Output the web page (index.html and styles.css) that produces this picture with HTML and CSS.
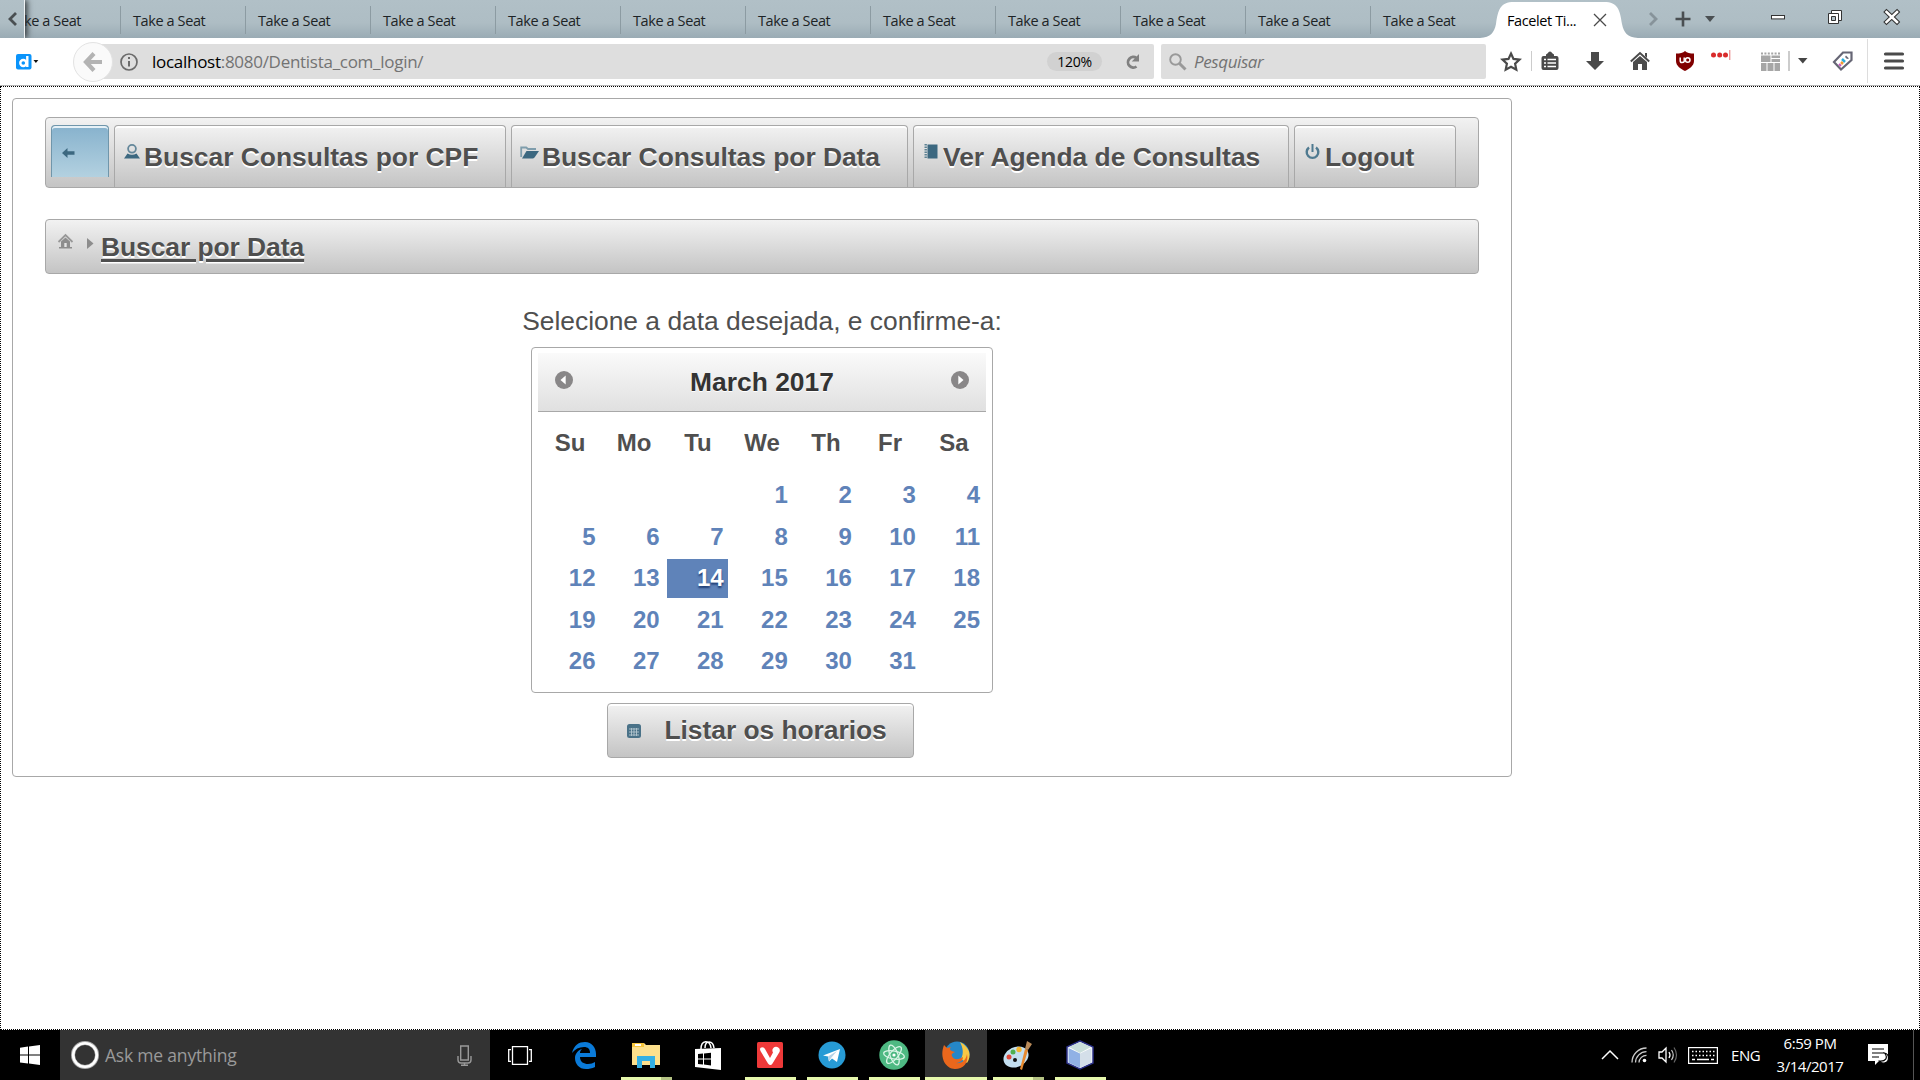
FILE: index.html
```html
<!DOCTYPE html>
<html lang="pt">
<head>
<meta charset="utf-8">
<title>Facelet Title</title>
<link rel="stylesheet" href="styles.css">
</head>
<body>
<header class="tabstrip">
  <div class="scroll-left"><svg width="10" height="16" viewBox="0 0 10 16"><path d="M8 2L2 8l6 6" fill="none" stroke="#4a4f52" stroke-width="2.8"/></svg></div>
  <div class="tab first"><span>ke a Seat</span></div>
  <div class="tab">Take a Seat</div><div class="tab">Take a Seat</div><div class="tab">Take a Seat</div><div class="tab">Take a Seat</div><div class="tab">Take a Seat</div><div class="tab">Take a Seat</div><div class="tab">Take a Seat</div><div class="tab">Take a Seat</div><div class="tab">Take a Seat</div><div class="tab">Take a Seat</div><div class="tab last">Take a Seat</div>
  <div class="active-tab">
    <svg class="tab-shape" width="158" height="36" viewBox="0 0 158 36"><path d="M0 36C11 35 14 31 16 22C18 8 20 0 34 0H124C138 0 140 8 142 22C144 31 147 35 158 36Z" fill="#fff"/></svg>
    <span class="active-label">Facelet Ti...</span>
    <svg class="tab-close" width="14" height="14" viewBox="0 0 14 14"><path d="M1 1l12 12M13 1L1 13" stroke="#4a4a4a" stroke-width="1.3"/></svg>
  </div>
  <div class="strip-tools">
    <svg class="t-next" width="10" height="16" viewBox="0 0 10 16"><path d="M2 2l6 6-6 6" fill="none" stroke="#87939a" stroke-width="2.8"/></svg>
    <svg class="t-plus" width="16" height="16" viewBox="0 0 16 16"><path d="M8 .5v15M.5 8h15" stroke="#4a4f52" stroke-width="2.6"/></svg>
    <svg class="t-all" width="10" height="6" viewBox="0 0 10 6"><path d="M0 0h10L5 6z" fill="#4a4f52"/></svg>
    <svg class="w-min" width="15" height="5" viewBox="0 0 15 5"><rect x=".5" y=".5" width="13" height="3.4" fill="#fff" stroke="#333"/></svg>
    <svg class="w-max" width="15" height="15" viewBox="0 0 15 15"><path d="M3.5.5h10v10h-10z" fill="#fff" stroke="#333"/><path d="M.5 3.5h10v10h-10z" fill="#fff" stroke="#333"/><path d="M3.5 6.500h4v4h-4z" fill="#afbec5" stroke="#333"/></svg>
    <svg class="w-close" width="16" height="16" viewBox="0 0 16 16"><path d="M2.500 3L13 13M13 3L2.500 13" stroke="#333" stroke-width="4.6" stroke-linecap="square"/><path d="M2.500 3L13 13M13 3L2.500 13" stroke="#fff" stroke-width="2.5" stroke-linecap="square"/></svg>
  </div>
</header>

<nav class="toolbar">
  <div class="ext-d"><svg width="24" height="16" viewBox="0 0 24 16"><rect width="15.500" height="15.500" rx="2" fill="#0a94fb"/><circle cx="7.300" cy="9" r="3" fill="none" stroke="#fff" stroke-width="2.400"/><path d="M11.300 2v11" stroke="#fff" stroke-width="2.400"/><path d="M17.500 6h4.800l-2.400 3z" fill="#111"/></svg></div>
  <div class="back-btn"><svg width="20" height="20" viewBox="0 0 20 20"><path d="M11 1.500L3 10l8 8.500M3 10h16" fill="none" stroke="#b3b3b3" stroke-width="4.200"/></svg></div>
  <div class="urlbar">
    <svg class="info" width="18" height="18" viewBox="0 0 18 18"><circle cx="9" cy="9" r="8" fill="none" stroke="#6b6b6b" stroke-width="1.700"/><path d="M9 8v5.500M9 4v2" stroke="#6b6b6b" stroke-width="2"/></svg>
    <span class="url"><b>localhost</b>:8080/Dentista_com_login/</span>
    <span class="zoom">120%</span>
    <svg class="reload" width="16" height="16" viewBox="0 0 16 16"><path d="M11.500 12.500A5.300 5.300 0 1 1 11.500 4" fill="none" stroke="#808080" stroke-width="2.800"/><path d="M14 0v7.500H6.800z" fill="#808080"/></svg>
  </div>
  <div class="search">
    <svg width="18" height="18" viewBox="0 0 18 18"><circle cx="6.500" cy="6.500" r="5.300" fill="none" stroke="#999" stroke-width="1.900"/><path d="M10.500 10.500L16.500 16.500" stroke="#999" stroke-width="3"/></svg>
    <span>Pesquisar</span>
  </div>
  <div class="tools">
    <svg class="i-star" width="22" height="21" viewBox="0 0 22 21"><path d="M11 2.500l2.500 5.400 6 .7-4.400 4.100 1.200 5.900L11 15.700l-5.300 2.900 1.200-5.900L2.500 8.600l6-.7z" fill="none" stroke="#4a4a4a" stroke-width="2.200"/></svg>
    <i class="sep short"></i>
    <svg class="i-clip" width="20" height="20" viewBox="0 0 20 20"><path d="M6 3.500l2-1.500q.3-1.500 2-1.500t2 1.500l2 1.500v1.500h2.500q2 0 2 2V17q0 2-2 2H3.500q-2 0-2-2V7q0-2 2-2H6z" fill="#4a4a4a"/><path d="M4 8.500h2M7.500 8.500H16M4 12h2M7.500 12H16M4 15.500h2M7.500 15.500H16" stroke="#fff" stroke-width="1.500"/></svg>
    <svg class="i-down" width="18" height="20" viewBox="0 0 18 20"><path d="M5 1h8v9h5L9 19 0 10h5z" fill="#4a4a4a"/></svg>
    <svg class="i-home" width="20" height="20" viewBox="0 0 20 20"><path d="M.8 10.500L10 2l9.200 8.500" fill="none" stroke="#4a4a4a" stroke-width="2"/><path d="M15 2h2v5l-2-2zM3 11l7-6 7 6v8h-5v-6H8v6H3z" fill="#4a4a4a"/></svg>
    <svg class="i-ub" width="18" height="20" viewBox="0 0 18 20"><path d="M9 0c2 2 5 2.500 9 2.500V10c0 5-5 8-9 10-4-2-9-5-9-10V2.500C4 2.500 7 2 9 0z" fill="#800000"/><path d="M4.200 6.500v3.200q0 1.800 1.700 1.800t2.300-1V6.500" fill="none" stroke="#fff" stroke-width="1.500"/><circle cx="11.700" cy="9" r="2.300" fill="none" stroke="#fff" stroke-width="1.500"/></svg>
    <svg class="i-dots" width="20" height="10" viewBox="0 0 20 10"><g fill="#d92b2b"><circle cx="2.500" cy="5" r="2.500"/><circle cx="8.700" cy="5" r="2.500"/><circle cx="14.500" cy="5" r="2.500"/></g><path d="M18.700 0v10" stroke="#e99" stroke-width="1.400"/></svg>
    <svg class="i-grid" width="19" height="19" viewBox="0 0 19 19"><path d="M0 1.500h19" stroke="#a6a6a6" stroke-width="2" stroke-dasharray="2 1.400"/><path d="M0 3.500h9.500V10H0zM10.500 3.500H19v2.500h-8.500zM10.500 7H19v3h-8.500zM0 11h5.500v8H0zM6.500 11h6v8h-6zM13.500 11H19v8h-5.500z" fill="#a6a6a6"/></svg>
    <i class="sep thick"></i>
    <svg class="i-caret" width="10" height="6" viewBox="0 0 10 6"><path d="M0 0h9.500L4.800 5.500z" fill="#444"/></svg>
    <svg class="i-tag" width="21" height="20" viewBox="0 0 21 20"><path d="M11 1.500h8.500V9L9 18.500 2 11z" fill="#fff" stroke="#666675" stroke-width="2.200"/><path d="M14 4.500l3 3-2 .5-2-2z" fill="#6a6a78"/><path d="M10 8l3 3" stroke="#2aaedc" stroke-width="2.500"/><path d="M9 11l2 2" stroke="#f39a33" stroke-width="2.500"/><path d="M7 13l2 2" stroke="#c754c0" stroke-width="2"/></svg>
    <i class="sep tall"></i>
    <svg class="i-menu" width="20" height="18" viewBox="0 0 20 18"><path d="M1.500 2h17M1.500 9h17M1.500 16h17" stroke="#4a4a4a" stroke-width="3.200" stroke-linecap="round"/></svg>
  </div>
</nav>

<main class="page">
  <section class="panel">
    <div class="menubar">
      <a class="menu-back"><svg width="13" height="10" viewBox="0 0 13 10"><path d="M0 5l5.500-5V3.300h7v3.400h-7V10z" fill="#3c6880"/></svg></a>
      <a class="menu-item m1"><svg width="16" height="15" viewBox="0 0 16 15"><circle cx="8" cy="4.800" r="3.900" fill="none" stroke="#64879a" stroke-width="1.800"/><path d="M0 14.500l3.500-5Q8 12 12.500 9.500L16 14.500z" fill="#3c6880"/></svg><span>Buscar Consultas por CPF</span></a>
      <a class="menu-item m2"><svg width="19" height="13" viewBox="0 0 19 13"><path d="M1.200 11V1.500h5L8 3h8" fill="none" stroke="#7f9dac" stroke-width="1.800"/><path d="M6.500 5H19l-4.500 6.500q-.7 1-2 1H2z" fill="#3c6880"/></svg><span>Buscar Consultas por Data</span></a>
      <a class="menu-item m3"><svg width="14" height="15" viewBox="0 0 14 15"><path d="M3.500.5H13.500v14H3.500z" fill="#3c6880"/><path d="M1.700 0v15" stroke="#5d8294" stroke-width="2.400" stroke-dasharray="1.500 1"/></svg><span>Ver Agenda de Consultas</span></a>
      <a class="menu-item m4"><svg width="15" height="16" viewBox="0 0 15 16"><path d="M4 3.500a5.800 5.800 0 1 0 7 0" fill="none" stroke="#4f7a90" stroke-width="2.400"/><path d="M7.500 0v8" stroke="#4f7a90" stroke-width="2"/></svg><span>Logout</span></a>
    </div>
    <div class="breadcrumb">
      <svg class="bc-home" width="15" height="15" viewBox="0 0 15 15"><path d="M.5 8l7-7 7 7" fill="none" stroke="#989898" stroke-width="1.800"/><path d="M3 7.500L7.500 3.500 12 7.500V13h2v1.500H1V13h2z" fill="#8d8d8d"/><path d="M6.300 9h2.400v4H6.300z" fill="#e4e4e4"/></svg>
      <svg class="bc-arrow" width="6" height="11" viewBox="0 0 6 11"><path d="M0 0l6.500 5.500L0 11z" fill="#8d8d8d"/></svg>
      <a>Buscar por Data</a>
    </div>
    <div class="content">
      <p class="prompt">Selecione a data desejada, e confirme-a:</p>
      <div class="calendar">
        <div class="cal-head">
          <svg width="18" height="18" viewBox="0 0 18 18"><circle cx="9" cy="9" r="9" fill="#898788"/><path d="M10.700 4.500v9L5.500 9z" fill="#fff"/></svg>
          <span>March 2017</span>
          <svg width="18" height="18" viewBox="0 0 18 18"><circle cx="9" cy="9" r="9" fill="#898788"/><path d="M7.300 4.500v9L12.500 9z" fill="#fff"/></svg>
        </div>
        <div class="dow"><span>Su</span><span>Mo</span><span>Tu</span><span>We</span><span>Th</span><span>Fr</span><span>Sa</span></div>
        <div class="days">
          <i></i><i></i><i></i><a>1</a><a>2</a><a>3</a><a>4</a>
          <a>5</a><a>6</a><a>7</a><a>8</a><a>9</a><a>10</a><a>11</a>
          <a>12</a><a>13</a><a class="today">14</a><a>15</a><a>16</a><a>17</a><a>18</a>
          <a>19</a><a>20</a><a>21</a><a>22</a><a>23</a><a>24</a><a>25</a>
          <a>26</a><a>27</a><a>28</a><a>29</a><a>30</a><a>31</a>
        </div>
      </div>
      <button class="submit"><svg width="14" height="14" viewBox="0 0 14 14"><rect width="14" height="14" rx="2.500" fill="#4a7288"/><path d="M2 5h10M2 8h10M2 11h10M4.500 4v8M7 4v8M9.500 4v8" stroke="#b4c6cf" stroke-width=".9"/></svg><span>Listar os horarios</span></button>
    </div>
  </section>
</main>

<footer class="taskbar">
  <div class="start"><svg width="20" height="20" viewBox="0 0 20 20"><path d="M0 2.700l8-1.100v8H0zM9 1.400L20 0v9.600H9zM0 10.500h8v8L0 17.400zM9 10.500h11V20L9 18.600z" fill="#fff"/></svg></div>
  <div class="cortana">
    <svg width="28" height="28" viewBox="0 0 28 28"><circle cx="14" cy="14" r="12" fill="none" stroke="#aaa" stroke-width="4"/><circle cx="14" cy="14" r="11.800" fill="none" stroke="#fff" stroke-width="2.600"/></svg>
    <span>Ask me anything</span>
    <svg class="mic" width="15" height="21" viewBox="0 0 15 21"><path d="M3.700 1h7.600v14H3.700zM1 11v4q0 3 3 3h7q3 0 3-3v-4M7.500 18v2M4 20.200h7" fill="none" stroke="#999" stroke-width="1.400"/></svg>
  </div>
  <div class="app taskview"><svg width="24" height="19" viewBox="0 0 24 19"><path d="M4.500.7h15v17.600h-15zM3 3.700H.7v11.600H3M21 3.700h2.300v11.600H21" fill="none" stroke="#fff" stroke-width="1.300"/></svg></div>
  <div class="app"><svg width="26" height="28" viewBox="0 0 26 28"><path d="M1 12C3 4 8 1 14 1c7 0 11 6 11 12v3H9c0 5 4 7 8 7 3 0 5-1 7-2v5c-3 1.500-6 2-9 2C8 28 4 23 4 17c0-4 3-8 7-9-2 2-2 3-2 4h10c0-4-2-6-6-6C8 6 4 8 1 12z" fill="#0a7ad8"/></svg></div>
  <div class="app run grouped"><svg width="28" height="26" viewBox="0 0 28 26"><path d="M0 1h12l2 2h14v20H0z" fill="#fde08c"/><path d="M0 1h12v4H0z" fill="#f7c63d"/><path d="M3 2h6v2H3z" fill="#fff"/><path d="M5 26V14h18v12h-5v-7h-8v7z" fill="#34b0e4"/></svg></div>
  <div class="app"><svg width="26" height="30" viewBox="0 0 26 30"><path d="M0 9l26-1v22L0 27z" fill="#fff"/><path d="M6 9C6 0 15-1 16 8M10 8c0-8 8-8 9 0" fill="none" stroke="#fff" stroke-width="1.500"/><path d="M3 14l5-.5v5H3zM9 13.400l7-.6v5.700H9zM3 19.500h5v5l-5-.6zM9 19.500h7v6l-7-.9z" fill="#000"/></svg></div>
  <div class="app run"><svg width="26" height="26" viewBox="0 0 26 26"><rect width="26" height="26" rx="1.500" fill="#ee3939"/><path d="M3 7.500C3 5 6.500 4.500 8 7l5 9 3-5.500a3.700 3.700 0 1 1 6.500-.5l-7 11.500q-2 3-4.500 0L3.500 9z" fill="#fff"/></svg></div>
  <div class="app run"><svg width="28" height="28" viewBox="0 0 28 28"><circle cx="14" cy="14" r="13.500" fill="#279bd5"/><path d="M5 14.500L22 8l-3 13-5-3.500-3 3-1-5z" fill="#fff"/><path d="M10 15.500l9-5.500-6 7-2 3.500z" fill="#b6d3e6"/></svg></div>
  <div class="app run"><svg width="30" height="30" viewBox="0 0 30 30"><circle cx="15" cy="15" r="14.700" fill="#4eb982"/><g fill="none" stroke="#d9f5e6" stroke-width="1.300"><ellipse cx="15" cy="15" rx="4" ry="10.500" transform="rotate(-20 15 15)"/><ellipse cx="15" cy="15" rx="4" ry="10.500" transform="rotate(40 15 15)"/><ellipse cx="15" cy="15" rx="4" ry="10.500" transform="rotate(100 15 15)"/></g><circle cx="15" cy="15" r="1.600" fill="#fff"/></svg></div>
  <div class="app run current"><svg width="28" height="28" viewBox="0 0 28 28"><circle cx="15" cy="13" r="12.500" fill="#2587c8"/><path d="M18 1c10 5 12 14 7 21l-6-4c3-6 2-11-1-17z" fill="#f7c844"/><path d="M2 4l3 3 4-1c-2 2-1 4 4 5-2 1-4 2-3 4 2 5 8 3 11 1 0 4-4 6-8 6 7 1 11-3 12-9 2 9-4 15-12 15C4 28-3 17 2 4z" fill="#ea671c"/></svg></div>
  <div class="app run grouped"><svg width="30" height="30" viewBox="0 0 30 30"><ellipse cx="13" cy="17" rx="13" ry="10" transform="rotate(-25 13 17)" fill="#c3dff0"/><circle cx="6" cy="17" r="2.500" fill="#e24a3b"/><circle cx="10" cy="12" r="2.500" fill="#4faf50"/><circle cx="16" cy="9.500" r="2.700" fill="#f4b52f"/><circle cx="12" cy="20" r="2" fill="#111"/><path d="M17 29L22 9l3 1-6 20z" fill="#e78a30"/><path d="M22 9l2-8 5 3-4 6z" fill="#b98a59"/></svg></div>
  <div class="app run"><svg width="28" height="30" viewBox="0 0 28 30"><path d="M14 1l13 6v16l-13 6L1 23V7z" fill="#fff" stroke="#2b3188" stroke-width="1.500"/><path d="M14 2l11 5-11 6L3 7z" fill="#c9dedb"/><path d="M2.500 8L14 13.500V28L2.500 22.500z" fill="#90b1e5"/><path d="M14 13.500L25.500 8v14.500L14 28z" fill="#d4dfe9"/></svg></div>
  <div class="tray">
    <svg class="up" width="18" height="10" viewBox="0 0 18 10"><path d="M1 9l8-8 8 8" fill="none" stroke="#fff" stroke-width="1.500"/></svg>
    <svg class="wifi" width="16" height="16" viewBox="0 0 16 16"><g fill="none" stroke="#ccc" stroke-width="1.300"><path d="M1 15.500A14.500 14.500 0 0 1 15.500 1M4.500 15.500A11 11 0 0 1 15.500 4.700M8 15.500a7.500 7.500 0 0 1 7.500-7.200"/></g><circle cx="13.500" cy="13.500" r="1.800" fill="#fff"/></svg>
    <svg class="vol" width="20" height="18" viewBox="0 0 20 18"><path d="M1 6h3l4-4v14l-4-4H1zM11 6q2 3 0 6" fill="none" stroke="#fff" stroke-width="1.300"/><path d="M13.500 4q3.500 5 0 10" fill="none" stroke="#ccc" stroke-width="1.200"/><path d="M16 1.500q5 7.500 0 15" fill="none" stroke="#666" stroke-width="1.200"/></svg>
    <svg class="kbd" width="30" height="17" viewBox="0 0 30 17"><rect x=".6" y=".6" width="28.800" height="15.800" fill="none" stroke="#fff" stroke-width="1.200"/><path d="M4 4.500h23M4 8.500h23" stroke="#fff" stroke-width="1.300" stroke-dasharray="1.500 2"/><path d="M4 12.500h3M9 12.500h12M23 12.500h3" stroke="#fff" stroke-width="1.300"/></svg>
    <span class="lang">ENG</span>
    <div class="clock"><span class="time">6:59 PM</span><span class="date">3/14/2017</span></div>
    <svg class="notif" width="22" height="22" viewBox="0 0 22 22"><path d="M0 0h20v17h-9l-4 4v-4H0z" fill="#fff"/><path d="M4 5h12M4 9h12M4 13h7" stroke="#000" stroke-width="1.200"/><path d="M16.500 9c4 5 1 8.500-5 8 3 4 9 2 9-3 0-3-2-4.500-4-5z" fill="#fff" stroke="#000" stroke-width="1.200"/></svg>
    <i class="peek"></i>
  </div>
</footer>
</body>
</html>
```
FILE: styles.css
```css
* { box-sizing: border-box; }
svg { display: block; flex: none; overflow: visible; }
body {
  margin: 0; width: 1920px; height: 1080px; overflow: hidden;
  display: flex; flex-direction: column; background: #fff;
  font-family: "Liberation Sans", Arial, sans-serif;
}

/* Tab strip */
.tabstrip {
  height: 38px; flex: none; display: flex; overflow: hidden;
  background: linear-gradient(#b1c0c7 0%, #aebdc4 60%, #9aabb4 100%);
  font: 14.500px/20px "Open Sans", "Noto Sans", sans-serif; color: #1d2326;
}
.scroll-left { width: 25px; flex: none; display: flex; align-items: center; padding-left: 8px; border-right: 1px solid #eef2f4; box-shadow: 2px 0 6px #2d3235; position: relative; z-index: 1; background: linear-gradient(#b1c0c7, #aebdc4 60%, #9aabb4); }
.tab { width: 125px; flex: none; padding: 11px 0 0 12px; white-space: nowrap; letter-spacing: -.4px; position: relative; }
.tab::after { content: ""; position: absolute; right: 0; top: 6px; width: 1px; height: 28px; background: #8c9ba2; }
.tab.first { width: 96px; padding-left: 0; }
.tab.first span { margin-left: -1px; }
.tab.last { width: 115px; }
.tab.last::after { display: none; }
.active-tab { width: 157px; margin-left: -6px; flex: none; display: flex; position: relative; color: #000; }
.tab-shape { position: absolute; left: 0; top: 2px; }
.active-label { position: relative; margin: 11px 0 0 27px; width: 86px; letter-spacing: -.4px; white-space: nowrap; }
.tab-close { position: relative; margin-top: 13px; margin-left: 0; }
.strip-tools { display: flex; align-items: center; height: 38px; }
.t-next { margin-left: 11px; }
.t-plus { margin-left: 17px; }
.t-all { margin-left: 14px; }
.w-min { margin: -4px 0 0 56px; }
.w-max { margin: -4px 0 0 42px; }
.w-close { margin: -4px 0 0 41px; }

/* Navigation toolbar */
.toolbar { height: 48px; flex: none; display: flex; align-items: center; border-bottom: 1px solid #b5b5b5; font-family: "Open Sans", "Noto Sans", sans-serif; }
.ext-d { width: 73px; padding-left: 16px; }
.back-btn { width: 40px; height: 40px; border-radius: 50%; border: 1px solid #e3e3e3; background: #fafafa; display: grid; place-items: center; position: relative; z-index: 1; }
.urlbar { width: 1061px; height: 35px; margin-left: -20px; background: #dedede; border-radius: 2px; display: flex; align-items: center; }
.info { margin-left: 27px; }
.url { margin-left: 14px; width: 895px; font-size: 17px; letter-spacing: -.28px; color: #737373; }
.url b { font-weight: 400; color: #000; }
.zoom { width: 55px; height: 19px; border-radius: 10px; background: #d1d1d1; text-align: center; font-size: 14px; line-height: 19px; letter-spacing: -.3px; }
.reload { margin-left: 23px; }
.search { margin-left: 7px; width: 325px; height: 35px; border-radius: 2px; background: #dedede; display: flex; align-items: center; padding-left: 8px; font-size: 17px; font-style: italic; letter-spacing: -.4px; color: #737373; }
.search span { margin-left: 7px; }
.tools { display: flex; align-items: center; height: 46px; margin-top: -1px; }
.sep { background: #ccc; width: 1px; height: 20px; }
.i-star { margin-left: 14px; }
.sep.short { margin-left: 9px; }
.i-clip { margin-left: 8px; }
.i-down { margin-left: 26px; }
.i-home { margin-left: 26px; }
.i-ub { margin-left: 26px; }
.i-dots { margin: -12px 0 0 17px; }
.i-grid { margin-left: 30px; }
.sep.thick { width: 2px; margin-left: 8px; }
.i-caret { margin-left: 8px; }
.i-tag { margin-left: 24px; }
.sep.tall { height: 44px; margin-left: 14px; background: #ddd; }
.i-menu { margin-left: 16px; }

/* Page */
.page { flex: 1; border: 1px dotted #000; padding: 11px; color: #4f4f4f; }
.panel { width: 1500px; height: 679px; border: 1px solid #a8a8a8; border-radius: 4px; padding: 18px 32px; font-size: 26.400px; }
.menubar, .breadcrumb, .submit, .menu-item { border: 1px solid #a8a8a8; background: linear-gradient(#f2f2f2, #c4c4c4); }
.menubar { height: 71px; border-radius: 4px; padding: 7px 5px 0; display: flex; gap: 5px; }
.menu-back { width: 58px; height: 52px; border: 1px solid #7096ab; border-bottom: 0; border-radius: 4px 4px 0 0; background: linear-gradient(#87b2cd, #b3d1e0); box-shadow: inset 0 2px #e6f1f7; padding: 22px 0 0 10px; }
.menu-item { border-bottom: 0; border-radius: 4px 4px 0 0; box-shadow: inset 0 2px #fff; display: flex; font-weight: 700; white-space: nowrap; text-shadow: 0 1.500px 0 #fff; }
.menu-item span { line-height: 30px; margin-top: 16px; }
.m1 { width: 392px; padding-left: 9px; }
.m1 svg { margin: 18px 4px 0 0; }
.m2 { width: 397px; padding-left: 8px; }
.m2 svg { margin: 20px 3px 0 0; }
.m2 span { letter-spacing: -.03px; }
.m3 { width: 376px; padding-left: 10px; }
.m3 svg { margin: 18px 5px 0 0; }
.m4 { width: 162px; padding-left: 10px; }
.m4 svg { margin: 18px 5px 0 0; }
.breadcrumb { height: 55px; margin-top: 31px; border-radius: 4px; display: flex; padding-left: 12px; font-weight: 700; text-shadow: 0 1.500px 0 #fff; }
.bc-home { margin-top: 14px; }
.bc-arrow { margin: 18px 8px 0 14px; }
.breadcrumb a { line-height: 30px; margin-top: 12px; letter-spacing: -.05px; text-decoration: underline; text-decoration-thickness: 2.500px; text-underline-offset: 3px; }
.content { display: flex; flex-direction: column; align-items: center; }
.prompt { margin: 32px 0 0; line-height: 30px; height: 41px; white-space: nowrap; }
.calendar { width: 462px; height: 346px; border: 1px solid #a8a8a8; border-radius: 4px; padding: 5px 6px; background: #fff; }
.cal-head { height: 59px; border-bottom: 1px solid #a8a8a8; background: linear-gradient(#fafafa, #e0e0e0); display: flex; justify-content: space-between; padding: 18px 17px 0; font-weight: 700; color: #333; text-shadow: 0 1px 0 #fff; }
.cal-head span { line-height: 30px; margin-top: -4px; }
.dow { display: grid; grid-template-columns: repeat(7, 64px); height: 64px; padding-top: 16px; text-align: center; font-weight: 700; font-size: 24px; line-height: 30px; }
.days { display: grid; grid-template-columns: repeat(7, 61px); grid-auto-rows: 39px; gap: 2.500px 3.100px; padding-left: 1px; text-align: right; font-weight: 700; font-size: 24px; line-height: 38px; color: #5f83b9; }
.days a { padding-right: 4.500px; }
.days .today { background: #5f83b9; color: #fff; text-shadow: 0 2px 2px #1f3d75; }
.submit { width: 307px; height: 55px; margin: 10px 4px 0 0; border-radius: 4px; box-shadow: inset 0 2px #fff; display: flex; align-items: center; padding: 0 0 0 19px; font: 700 26.400px/30px "Liberation Sans", Arial, sans-serif; color: #4f4f4f; text-shadow: 0 1.500px 0 #fff; }
.submit span { margin: -2px 0 0 24px; letter-spacing: -.04px; }

/* Taskbar */
.taskbar { height: 50px; flex: none; background: #000; display: flex; color: #fff; font-family: "Open Sans", "Noto Sans", sans-serif; }
.start { width: 60px; display: grid; place-items: center; }
.cortana { width: 430px; background: #333; display: flex; align-items: center; padding-left: 11px; font-size: 17.500px; letter-spacing: -.2px; color: #9a9a9a; }
.cortana span { margin-left: 6px; width: 352px; }
.app { width: 62px; display: grid; place-items: center; border-bottom: 3px solid transparent; padding-top: 3px; position: relative; }
.taskview { width: 63px; padding-right: 3px; }
.app.run::after { content: ""; position: absolute; left: 6px; bottom: -3px; width: 51px; height: 3px; background: #e6f8ac; }
.app.grouped::after { background: linear-gradient(90deg, #e6f8ac 40px, #b5c384 40px); }
.app.current { background: #343434 border-box; }
.app.current::after { left: 0; width: 62px; }
.tray { margin-left: auto; display: flex; align-items: center; width: 319px; font-size: 15px; }
.wifi { margin-left: 12px; }
.vol { margin-left: 11px; }
.kbd { margin-left: 10px; }
.lang { margin-left: 13px; width: 41px; letter-spacing: -.4px; }
.clock { width: 76px; text-align: center; line-height: 23px; }
.clock span { display: block; letter-spacing: -.45px; }
.notif { margin-left: 20px; }
.peek { margin-left: 23px; width: 1px; height: 50px; background: #555; }
```
